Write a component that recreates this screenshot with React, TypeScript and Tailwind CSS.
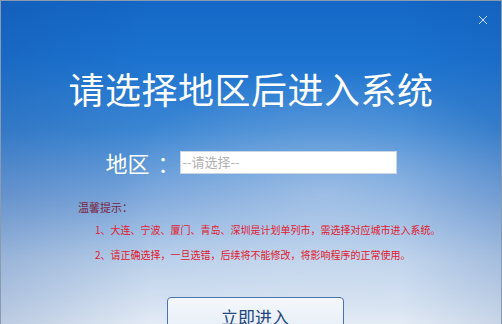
import React from "react";

export default function App() {
  return (
    <div
      className="relative w-[502px] h-[324px] overflow-hidden border border-[#8a9bb0] border-b-0"
      style={{ fontFamily: '"Noto Sans CJK SC", "Noto Sans", sans-serif' }}
    >
      <div className="absolute inset-0 bg-[linear-gradient(180deg,#1467c6_0%,#1c73d0_18%,#3c86d3_40%,#7fa9dc_62%,#b9cfea_80%,#e3ebf5_100%)]" />
      <div className="absolute inset-0 bg-[radial-gradient(ellipse_60%_55%_at_65%_60%,rgba(255,255,255,0.28),rgba(255,255,255,0)_70%)]" />
      <div className="absolute inset-0 bg-[linear-gradient(90deg,rgba(10,60,140,0.18)_0%,rgba(10,60,140,0)_30%,rgba(10,60,140,0)_80%,rgba(10,60,140,0.12)_100%)]" />

      <button className="absolute right-[13px] top-[14px] w-[10px] h-[10px] text-[#cfe0f5]">
        <svg viewBox="0 0 10 10" className="w-[10px] h-[10px]">
          <path d="M1 1 L9 9 M9 1 L1 9" stroke="currentColor" strokeWidth="1" fill="none" />
        </svg>
      </button>

      <div className="relative flex flex-col items-center">
        <h1 className="mt-[65px] text-[36px] leading-[44px] text-white tracking-[0.5px] font-normal">
          请选择地区后进入系统
        </h1>

        <div className="mt-[39px] flex items-center">
          <span className="text-[22px] leading-[26px] text-white">地区</span>
          <span className="ml-[8px] w-[14px] overflow-visible whitespace-nowrap text-[22px] leading-[26px] text-white">：</span>
          <div className="ml-[8px] w-[217px] h-[23px] bg-white border border-[#c9d6e6] flex items-center pl-[2px]">
            <span className="text-[13px] leading-[16px] text-[#b0b0b0]">--请选择--</span>
          </div>
        </div>

        <div className="self-start ml-[77px] mt-[25px] text-[11px] leading-[14px] text-[#7a1f3c]">
          温馨提示：
        </div>
        <div className="self-start ml-[94px] mt-[9px] text-[10px] leading-[14px] text-[#e0202e]">
          1、大连、宁波、厦门、青岛、深圳是计划单列市，需选择对应城市进入系统。
        </div>
        <div className="self-start ml-[94px] mt-[11px] text-[10px] leading-[14px] text-[#e0202e]">
          2、请正确选择，一旦选错，后续将不能修改，将影响程序的正常使用。
        </div>

        <button className="mt-[35px] ml-[8px] w-[177px] h-[40px] rounded-[4px] border border-[#4a74ad] bg-[linear-gradient(180deg,#f4f8fc,#e4ecf5)] flex justify-center pt-[9px]">
          <span className="text-[17px] leading-[20px] text-[#23457d]">立即进入</span>
        </button>
      </div>
    </div>
  );
}
